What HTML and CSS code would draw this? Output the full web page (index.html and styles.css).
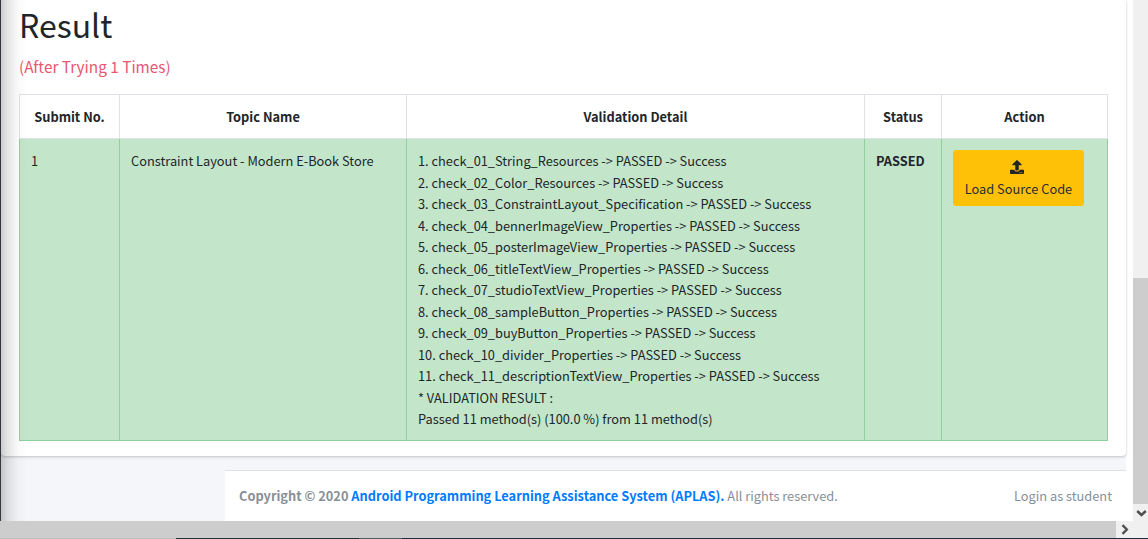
FILE: index.html
```html
<!DOCTYPE html>
<html lang="en">
<head>
<meta charset="utf-8">
<title>Result</title>
<link rel="stylesheet" href="styles.css">
</head>
<body>
<div class="window">
  <div class="viewport">
    <div class="sidebar-edge"></div>
    <div class="content">
      <section class="card">
        <h1 class="title">Result</h1>
        <p class="tries">(After Trying 1 Times)</p>
        <table class="results">
          <colgroup><col class="c-no"><col class="c-topic"><col class="c-detail"><col class="c-status"><col class="c-action"></colgroup>
          <thead>
            <tr><th>Submit No.</th><th>Topic Name</th><th>Validation Detail</th><th>Status</th><th>Action</th></tr>
          </thead>
          <tbody>
            <tr>
              <td>1</td>
              <td>Constraint Layout - Modern E-Book Store</td>
              <td>1. check_01_String_Resources -&gt; PASSED -&gt; Success<br>2. check_02_Color_Resources -&gt; PASSED -&gt; Success<br>3. check_03_ConstraintLayout_Specification -&gt; PASSED -&gt; Success<br>4. check_04_bennerImageView_Properties -&gt; PASSED -&gt; Success<br>5. check_05_posterImageView_Properties -&gt; PASSED -&gt; Success<br>6. check_06_titleTextView_Properties -&gt; PASSED -&gt; Success<br>7. check_07_studioTextView_Properties -&gt; PASSED -&gt; Success<br>8. check_08_sampleButton_Properties -&gt; PASSED -&gt; Success<br>9. check_09_buyButton_Properties -&gt; PASSED -&gt; Success<br>10. check_10_divider_Properties -&gt; PASSED -&gt; Success<br>11. check_11_descriptionTextView_Properties -&gt; PASSED -&gt; Success<br>* VALIDATION RESULT :<br>Passed 11 method(s) (100.0 %) from 11 method(s)</td>
              <td><b>PASSED</b></td>
              <td>
                <button class="load" type="button">
                  <svg class="upload" viewBox="0 0 512 512" aria-hidden="true"><path fill="currentColor" d="M296 384h-80c-13.300 0-24-10.700-24-24V192h-87.700c-17.800 0-26.700-21.500-14.100-34.100L242.300 5.700c7.500-7.500 19.800-7.500 27.300 0l152.200 152.200c12.600 12.600 3.700 34.100-14.100 34.100H320v168c0 13.300-10.700 24-24 24zm216-8v112c0 13.300-10.700 24-24 24H24c-13.300 0-24-10.700-24-24V376c0-13.300 10.700-24 24-24h136v8c0 30.900 25.100 56 56 56h80c30.900 0 56-25.100 56-56v-8h136c13.300 0 24 10.700 24 24zm-124 88c0-11-9-20-20-20s-20 9-20 20 9 20 20 20 20-9 20-20zm64 0c0-11-9-20-20-20s-20 9-20 20 9 20 20 20 20-9 20-20z"/></svg>
                  <span>Load Source Code</span>
                </button>
              </td>
            </tr>
          </tbody>
        </table>
      </section>
      <footer class="footer">
        <div><b>Copyright © 2020 <a>Android Programming Learning Assistance System (APLAS).</a></b> All rights reserved.</div>
        <div>Login as student</div>
      </footer>
      <div class="edge-shadow"></div>
    </div>
  </div>
  <div class="vbar">
    <div class="vthumb"></div>
    <svg class="arrow-down" viewBox="0 0 15 17"><path d="M4.200 7 8.500 11 12.800 7" fill="none" stroke="#505050" stroke-width="2.400"/></svg>
  </div>
  <div class="hbar">
    <div class="hthumb"></div>
    <svg class="arrow-right" viewBox="0 0 17 17"><path d="M6.500 4.200 10.800 8.500 6.500 12.800" fill="none" stroke="#505050" stroke-width="2.400"/></svg>
  </div>
  <div class="taskline"><i class="seg-light"></i><i class="seg-dark"></i><i class="seg-mid"></i><i class="seg-rest"></i></div>
</div>
</body>
</html>
```
FILE: styles.css
```css
* { box-sizing: border-box; }
body {
  margin: 0;
  background: #fff;
  color: #212529;
  font: 12.81px/21.5px "Noto Sans CJK SC", "Noto Sans", sans-serif;
  overflow: hidden;
}
.window {
  display: grid;
  grid-template-columns: 1133px 15px;
  grid-template-rows: 521px 17px 1px;
  width: 1148px;
  height: 539px;
}
.viewport { display: flex; padding-right: 7px; overflow: hidden; }
.sidebar-edge { width: 1px; background: #343a40; }
.content {
  position: relative;
  flex: 1;
  display: flex;
  flex-direction: column;
  background: #f4f6f9;
}
.card {
  height: 456px;
  padding: 0 18px;
  background: #fff;
  border-radius: 0 0 4px 4px;
  box-shadow: 0 0 1px rgba(0,0,0,.125), 0 1px 3px rgba(0,0,0,.2);
}
.title {
  margin: 0;
  padding-top: 3px;
  font-size: 32px;
  font-weight: 400;
  line-height: 43px;
}
.tries {
  margin: 0;
  padding-top: 9px;
  height: 48px;
  font-size: 15.35px;
  line-height: 22px;
  color: #e65770;
}
.results {
  width: 1089px;
  table-layout: fixed;
  border-collapse: collapse;
}
.c-no { width: 100px; }
.c-topic { width: 287px; }
.c-detail { width: 458px; }
.c-status { width: 77px; }
.c-action { width: 166px; }
.results th {
  height: 44px;
  padding: 1px 0 0;
  border: 1px solid #dee2e6;
  font-weight: 700;
}
.results td {
  height: 302px;
  padding: 11px 0 0 11px;
  border: 1px solid #8fd19e;
  background: #c3e6cb;
  vertical-align: top;
  white-space: nowrap;
}
.load {
  display: flex;
  flex-direction: column;
  align-items: center;
  width: 131px;
  height: 56px;
  padding: 10px 0 0;
  border: 0;
  border-radius: 3px;
  background: #ffc107;
  color: #1f2d3d;
  font: inherit;
}
.upload { width: 14px; height: 14px; margin-right: 3px; color: #212529; }
.load span { padding-top: 4px; }
.footer {
  display: flex;
  justify-content: space-between;
  margin: 14px 0 0 224px;
  height: 51px;
  padding: 14px 14px 0;
  border-top: 1px solid #dee2e6;
  background: #fff;
  color: #869099;
}
.footer a { color: #007bff; }
.edge-shadow {
  position: absolute;
  inset: 0 auto 0 0;
  width: 28px;
  background: linear-gradient(90deg, rgba(0,0,0,.2), rgba(0,0,0,.1) 25%, rgba(0,0,0,.025) 60%, transparent);
}
.vbar { display: flex; flex-direction: column; background: #f0f0f0; padding-top: 278px; }
.vthumb { height: 226px; background: #cdcdcd; }
.arrow-down { width: 15px; height: 17px; }
.hbar { grid-column: 1 / -1; display: flex; background: #f0f0f0; }
.hthumb { width: 1116px; background: #cdcdcd; }
.arrow-right { width: 17px; height: 17px; }
.taskline { grid-column: 1 / -1; display: flex; }
.seg-light { width: 176px; background: #bdbdbd; }
.seg-dark { width: 183px; background: #20343b; }
.seg-mid { width: 43px; background: #4c5c62; }
.seg-rest { flex: 1; background: #1d2d3d; }
```
